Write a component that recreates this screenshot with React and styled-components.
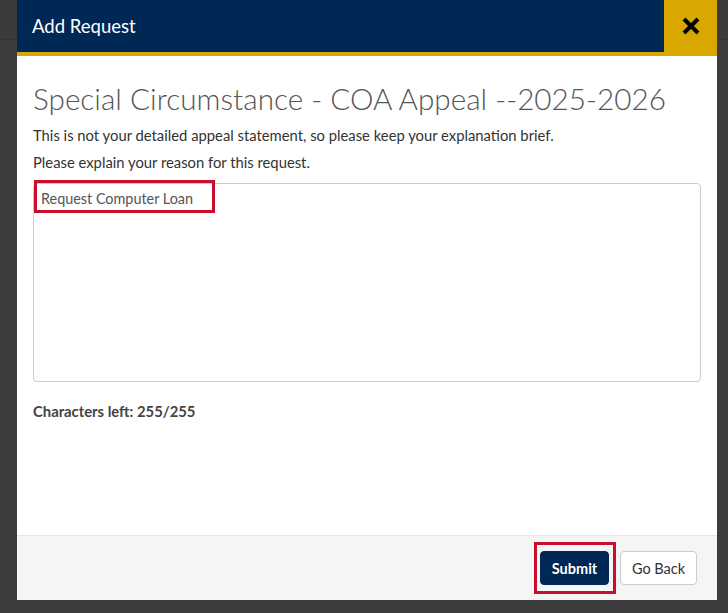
import React from 'react';
import styled, { createGlobalStyle } from 'styled-components';

const GlobalStyle = createGlobalStyle`
  html, body {
    margin: 0;
    padding: 0;
  }
  body {
    background: linear-gradient(#3b3b3b 0, #3b3b3b 39px, #333 39px, #333 40px, #3d3d3d 40px);
    font-family: Lato, "Open Sans", Arial, sans-serif;
    height: 613px;
    overflow: hidden;
  }
`;

const Modal = styled.div`
  width: 700px;
  height: 600px;
  margin-left: 17px;
  background: #fff;
  display: flex;
  flex-direction: column;
`;

const Header = styled.div`
  display: flex;
  height: 56px;
`;

const HeaderTitle = styled.div`
  flex: 1;
  background: #002855;
  border-bottom: 4px solid #d8a800;
  color: #fff;
  font-size: 18.5px;
  padding-left: 15px;
  display: flex;
  align-items: center;
`;

const CloseButton = styled.button`
  width: 53px;
  border: none;
  background: #d8a800;
  padding: 0 0 4px;
  display: flex;
  align-items: center;
  justify-content: center;
  cursor: pointer;
`;

const Body = styled.div`
  flex: 1;
  padding: 25px 16px 0;
`;

const Title = styled.h2`
  margin: 0 0 8px;
  font-size: 29.7px;
  font-weight: 300;
  color: #555;
  line-height: 36px;
`;

const Note = styled.p`
  margin: 0 0 7px;
  font-size: 14.8px;
  line-height: 20px;
  color: #333;
`;

const FieldWrap = styled.div`
  position: relative;
  margin-top: 11px;
`;

const TextArea = styled.textarea`
  display: block;
  box-sizing: border-box;
  width: 100%;
  height: 199px;
  border: 1px solid #ccc;
  border-radius: 4px;
  padding: 6px 7px;
  font-family: Lato, "Open Sans", Arial, sans-serif;
  font-size: 14.4px;
  color: #555;
  resize: none;
  outline: none;
`;

const Highlight = styled.div`
  position: absolute;
  left: 1px;
  top: -3px;
  width: 181px;
  height: 33px;
  box-sizing: border-box;
  border: 3px solid #c8102e;
  pointer-events: none;
`;

const Counter = styled.div`
  margin-top: 20px;
  font-size: 14.8px;
  line-height: 18px;
  font-weight: 700;
  color: #444;
`;

const Footer = styled.div`
  height: 64px;
  background: #f5f5f5;
  border-top: 1px solid #e5e5e5;
  display: flex;
  align-items: center;
  justify-content: flex-end;
  padding-right: 20px;
  gap: 4px;
`;

const Outline = styled.div`
  border: 3px solid #c8102e;
  padding: 6px 4px 6px 3px;
  display: flex;
`;

const Button = styled.button`
  height: 34px;
  width: ${({ $primary }) => ($primary ? '69px' : '77px')};
  padding: 0;
  border-radius: 4px;
  font-family: Lato, "Open Sans", Arial, sans-serif;
  font-size: 14.5px;
  cursor: pointer;
  border: 1px solid ${({ $primary }) => ($primary ? '#002855' : '#ccc')};
  background: ${({ $primary }) => ($primary ? '#002855' : '#fff')};
  color: ${({ $primary }) => ($primary ? '#fff' : '#333')};
  font-weight: ${({ $primary }) => ($primary ? 700 : 400)};
`;

export default function App() {
  return (
    <>
      <GlobalStyle />
      <Modal>
        <Header>
          <HeaderTitle>Add Request</HeaderTitle>
          <CloseButton aria-label="Close">
            <svg width="18" height="18" viewBox="0 0 18 18">
              <path d="M2 2L16 16M16 2L2 16" stroke="#000" strokeWidth="4" strokeLinecap="butt" />
            </svg>
          </CloseButton>
        </Header>
        <Body>
          <Title>Special Circumstance - COA Appeal --2025-2026</Title>
          <Note>This is not your detailed appeal statement, so please keep your explanation brief.</Note>
          <Note>Please explain your reason for this request.</Note>
          <FieldWrap>
            <TextArea defaultValue="Request Computer Loan" maxLength={255} />
            <Highlight />
          </FieldWrap>
          <Counter>Characters left: 255/255</Counter>
        </Body>
        <Footer>
          <Outline>
            <Button $primary>Submit</Button>
          </Outline>
          <Button>Go Back</Button>
        </Footer>
      </Modal>
    </>
  );
}
